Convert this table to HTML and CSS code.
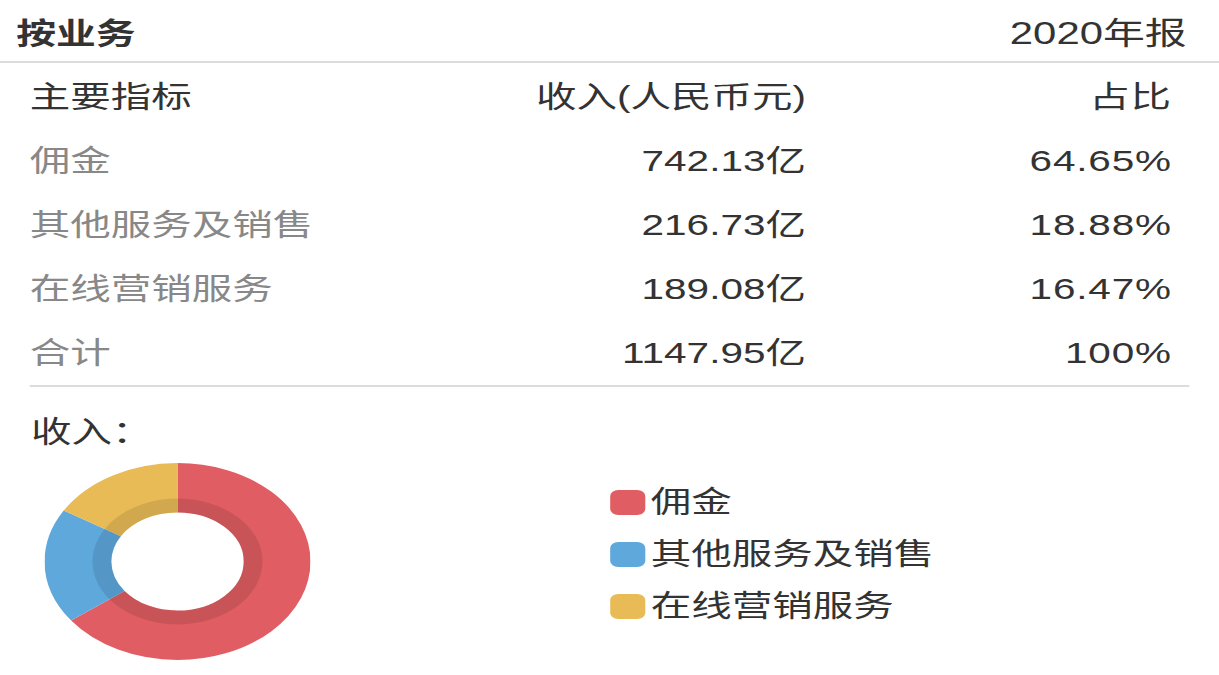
FILE: index.html
```html
<!DOCTYPE html>
<html lang="zh-CN">
<head>
<meta charset="utf-8">
<title>按业务</title>
<link rel="stylesheet" href="styles.css">
</head>
<body>
<div class="page">
  <header class="head">
    <div class="title">按业务</div>
    <div class="period">2020年报</div>
  </header>
  <div class="table">
    <div class="row th">
      <div class="c1">主要指标</div>
      <div class="c2">收入(人民币元)</div>
      <div class="c3">占比</div>
    </div>
    <div class="row">
      <div class="c1 name">佣金</div>
      <div class="c2">742.13亿</div>
      <div class="c3">64.65%</div>
    </div>
    <div class="row">
      <div class="c1 name">其他服务及销售</div>
      <div class="c2">216.73亿</div>
      <div class="c3">18.88%</div>
    </div>
    <div class="row">
      <div class="c1 name">在线营销服务</div>
      <div class="c2">189.08亿</div>
      <div class="c3">16.47%</div>
    </div>
    <div class="row">
      <div class="c1 name">合计</div>
      <div class="c2">1147.95亿</div>
      <div class="c3">100%</div>
    </div>
  </div>
  <div class="label">收入：</div>
  <div class="chart">
    <svg class="donut" width="197" height="197" viewBox="0 0 197 197">
      <g transform="rotate(-90 98.5 98.5)" fill="none" stroke-width="49.5">
        <circle cx="98.5" cy="98.5" r="73.75" stroke="#e05e63" stroke-dasharray="299.57 463.38" stroke-dashoffset="0"/>
        <circle cx="98.5" cy="98.5" r="73.75" stroke="#5ea8dc" stroke-dasharray="87.49 463.38" stroke-dashoffset="-299.57"/>
        <circle cx="98.5" cy="98.5" r="73.75" stroke="#e9bb57" stroke-dasharray="76.32 463.38" stroke-dashoffset="-387.06"/>
      </g>
      <circle cx="98.5" cy="98.5" r="56" fill="none" stroke="rgba(0,0,0,0.1)" stroke-width="14"/>
    </svg>
    <ul class="legend">
      <li><span class="sw red"></span>佣金</li>
      <li><span class="sw blue"></span>其他服务及销售</li>
      <li><span class="sw yellow"></span>在线营销服务</li>
    </ul>
  </div>
</div>
</body>
</html>
```
FILE: styles.css
```css
html, body {
  margin: 0;
  padding: 0;
  background: #fff;
  overflow: hidden;
}
body {
  width: 1219px;
  height: 675px;
}
.page {
  width: 903px;
  transform: scaleX(1.35);
  transform-origin: 0 0;
  font-family: "Liberation Sans", "Noto Sans CJK SC", sans-serif;
  font-size: 30px;
  color: #333;
}
.head {
  height: 61px;
  display: flex;
  align-items: center;
  justify-content: space-between;
  padding: 0 24px 0 12px;
  border-bottom: 2px solid #dcdcdc;
}
.title {
  font-weight: 700;
  font-family: "Noto Sans CJK SC", sans-serif;
  font-size: 29.5px;
}
.period {
  font-size: 31px;
}
.table {
  margin: 0 22px;
  padding: 2px 13px 0 0;
  border-bottom: 2px solid #dcdcdc;
}
.row {
  display: grid;
  grid-template-columns: 322px 253px 1fr;
  height: 64px;
  align-items: center;
  line-height: 40px;
}
.c2, .c3 {
  text-align: right;
}
.c3 {
  letter-spacing: 0.6px;
}
.name {
  color: #888;
}
.label {
  padding: 25px 0 0 23px;
  line-height: 40px;
}
.chart {
  display: flex;
  align-items: flex-start;
}
.donut {
  display: block;
  margin: 11px 0 0 33px;
}
.legend {
  list-style: none;
  margin: 24px 0 0 222px;
  padding: 0;
}
.legend li {
  height: 52px;
  display: flex;
  align-items: center;
  gap: 4px;
  line-height: 40px;
}
.sw {
  width: 26px;
  height: 25px;
  border-radius: 6px;
  display: block;
}
.red { background: #e05e63; }
.blue { background: #5ea8dc; }
.yellow { background: #e9bb57; }
```
